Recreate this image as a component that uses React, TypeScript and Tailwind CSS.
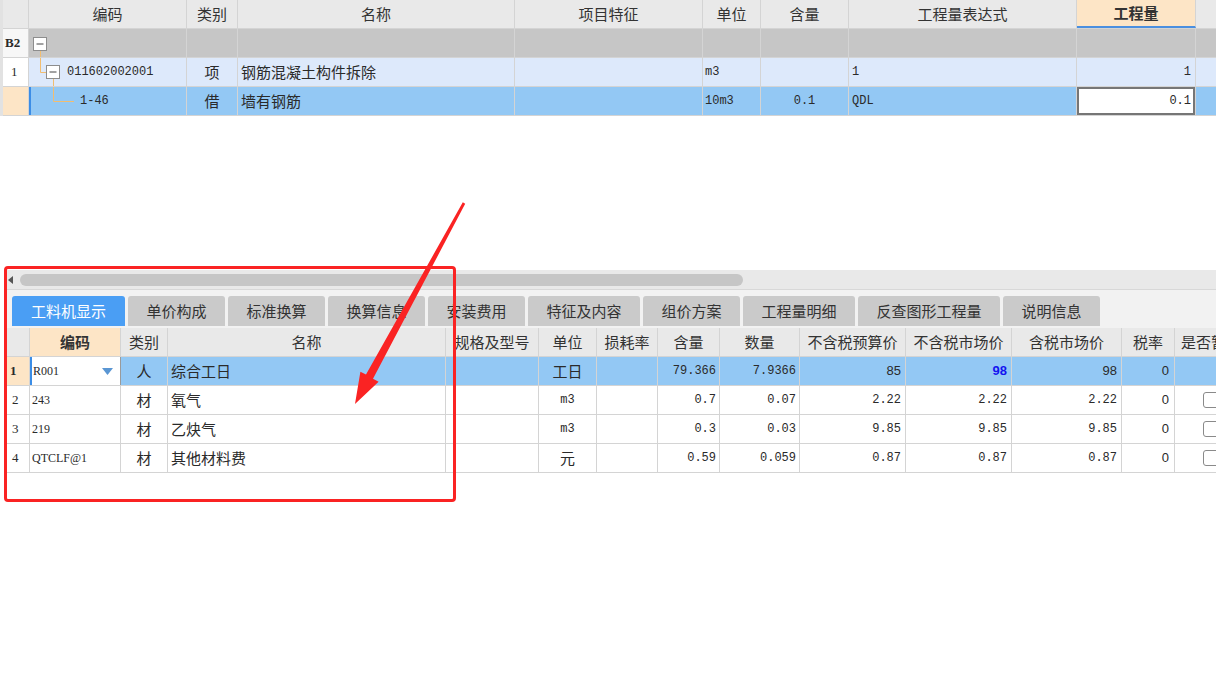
import React from "react";

const cjk = "font-['Noto_Sans_CJK_SC',sans-serif]";
const mono = "font-['Liberation_Mono','Noto_Sans_CJK_SC',monospace]";
const serif = "font-['Liberation_Serif',serif]";
const sans = "font-['Liberation_Sans',sans-serif]";

const cell = "shrink-0 h-full border-r border-[#d4d4d4] flex items-center overflow-hidden whitespace-nowrap relative";

// top grid columns
const T = [
  "w-[26px]",
  "w-[158px]",
  "w-[51px]",
  "w-[277px]",
  "w-[188px]",
  "w-[58px]",
  "w-[88px]",
  "w-[228px]",
  "w-[119px]",
  "w-[40px]",
];

// bottom grid columns
const B = [
  "w-[23px]",
  "w-[91px]",
  "w-[47px]",
  "w-[278px]",
  "w-[93px]",
  "w-[58px]",
  "w-[61px]",
  "w-[62px]",
  "w-[80px]",
  "w-[106px]",
  "w-[106px]",
  "w-[110px]",
  "w-[53px]",
  "w-[60px]",
];

const tabs = [
  { label: "工料机显示", w: "w-[113px]", active: true },
  { label: "单价构成", w: "w-[97px]" },
  { label: "标准换算", w: "w-[97px]" },
  { label: "换算信息", w: "w-[97px]" },
  { label: "安装费用", w: "w-[97px]" },
  { label: "特征及内容", w: "w-[112px]" },
  { label: "组价方案", w: "w-[97px]" },
  { label: "工程量明细", w: "w-[112px]" },
  { label: "反查图形工程量", w: "w-[142px]" },
  { label: "说明信息", w: "w-[97px]" },
];

const rows = [
  { n: "2", code: "243", type: "材", name: "氧气", unit: "m3", hl: "0.7", qty: "0.07", p1: "2.22", p2: "2.22", p3: "2.22" },
  { n: "3", code: "219", type: "材", name: "乙炔气", unit: "m3", hl: "0.3", qty: "0.03", p1: "9.85", p2: "9.85", p3: "9.85" },
  { n: "4", code: "QTCLF@1", type: "材", name: "其他材料费", unit: "元", hl: "0.59", qty: "0.059", p1: "0.87", p2: "0.87", p3: "0.87" },
];

function MinusBox({ x, y }: { x: number; y: number }) {
  return (
    <g>
      <rect x={x + 0.5} y={y + 0.5} width={13} height={13} fill="#fff" stroke="#8d8d8d" />
      <line x1={x + 3.5} y1={y + 7} x2={x + 10.5} y2={y + 7} stroke="#444" />
    </g>
  );
}

export default function App() {
  return (
    <div className={`relative w-[1216px] h-[697px] overflow-hidden bg-white text-[#2a2a2a] ${cjk}`}>
      {/* top grid */}
      <div className="border-l-[3px] border-[#e2e2e2]">
        <div className="flex h-[29px] bg-[#e9e9e9] border-b border-[#d4d4d4] text-[15px] text-[#333]">
          <div className={`${cell} ${T[0]}`} />
          <div className={`${cell} ${T[1]} justify-center`}>编码</div>
          <div className={`${cell} ${T[2]} justify-center`}>类别</div>
          <div className={`${cell} ${T[3]} justify-center`}>名称</div>
          <div className={`${cell} ${T[4]} justify-center`}>项目特征</div>
          <div className={`${cell} ${T[5]} justify-center`}>单位</div>
          <div className={`${cell} ${T[6]} justify-center`}>含量</div>
          <div className={`${cell} ${T[7]} justify-center`}>工程量表达式</div>
          <div className={`${cell} ${T[8]} justify-center bg-[#fde5c6] font-bold border-b-2 border-b-[#4a8fe0]`}>工程量</div>
          <div className={`${cell} ${T[9]}`} />
        </div>

        {/* B2 row */}
        <div className="flex h-[29px] bg-[#c6c6c6] border-b border-[#d4d4d4]">
          <div className={`${cell} ${T[0]} bg-[#f7f7f7] pl-[2px] ${serif} font-bold text-[13px]`}>B2</div>
          <div className={`${cell} ${T[1]}`}>
            <svg className="absolute inset-0 overflow-visible" width="158" height="29">
              <line x1="11.5" y1="22" x2="11.5" y2="29" stroke="#f2bd70" />
              <MinusBox x={4} y={8} />
            </svg>
          </div>
          <div className={`${cell} ${T[2]}`} />
          <div className={`${cell} ${T[3]}`} />
          <div className={`${cell} ${T[4]}`} />
          <div className={`${cell} ${T[5]}`} />
          <div className={`${cell} ${T[6]}`} />
          <div className={`${cell} ${T[7]}`} />
          <div className={`${cell} ${T[8]}`} />
          <div className={`${cell} ${T[9]}`} />
        </div>

        {/* row 1 */}
        <div className="flex h-[29px] bg-[#dde9fb] border-b border-[#d4d4d4] text-[15px]">
          <div className={`${cell} ${T[0]} bg-white pl-[8px] ${serif} text-[13px]`}>1</div>
          <div className={`${cell} ${T[1]}`}>
            <svg className="absolute inset-0 overflow-visible" width="158" height="29">
              <path d="M11.5 0 V14.5 H17" fill="none" stroke="#f2bd70" />
              <line x1="24.5" y1="21" x2="24.5" y2="29" stroke="#f2bd70" />
              <MinusBox x={17} y={7} />
            </svg>
            <span className={`pl-[38px] ${mono} text-[12px]`}>011602002001</span>
          </div>
          <div className={`${cell} ${T[2]} justify-center`}>项</div>
          <div className={`${cell} ${T[3]} pl-[3px]`}>钢筋混凝土构件拆除</div>
          <div className={`${cell} ${T[4]}`} />
          <div className={`${cell} ${T[5]} pl-[2px] ${mono} text-[12px]`}>m3</div>
          <div className={`${cell} ${T[6]}`} />
          <div className={`${cell} ${T[7]} pl-[3px] ${mono} text-[12px]`}>1</div>
          <div className={`${cell} ${T[8]} justify-end pr-[4px] ${mono} text-[12px]`}>1</div>
          <div className={`${cell} ${T[9]}`} />
        </div>

        {/* row 2 selected */}
        <div className="flex h-[29px] bg-[#93c8f4] border-b border-[#d4d4d4] text-[15px]">
          <div className={`${cell} ${T[0]} bg-[#fde5c6]`} />
          <div className={`${cell} ${T[1]} border-l-2 border-l-[#3b8de6]`}>
            <svg className="absolute inset-0 overflow-visible" width="158" height="29">
              <path d="M22.5 0 V14.5 H43" fill="none" stroke="#f2bd70" />
            </svg>
            <span className={`pl-[49px] ${mono} text-[12px]`}>1-46</span>
          </div>
          <div className={`${cell} ${T[2]} justify-center`}>借</div>
          <div className={`${cell} ${T[3]} pl-[3px]`}>墙有钢筋</div>
          <div className={`${cell} ${T[4]}`} />
          <div className={`${cell} ${T[5]} pl-[2px] ${mono} text-[12px]`}>10m3</div>
          <div className={`${cell} ${T[6]} justify-center ${mono} text-[12px]`}>0.1</div>
          <div className={`${cell} ${T[7]} pl-[3px] ${mono} text-[12px]`}>QDL</div>
          <div className={`${cell} ${T[8]} p-0`}>
            <div className={`w-full h-full bg-white border-2 border-[#767676] flex items-center justify-end pr-[2px] ${mono} text-[12px]`}>0.1</div>
          </div>
          <div className={`${cell} ${T[9]}`} />
        </div>
      </div>

      {/* spacer */}
      <div className="h-[154px]" />

      {/* bottom panel */}
      <div className="ml-[7px]">
        {/* horizontal scrollbar */}
        <div className="flex items-center h-[19px] bg-[#e9e9e9]">
          <svg className="ml-[1px] shrink-0" width="5" height="8" viewBox="0 0 5 8">
            <path d="M5 0 L0 4 L5 8 Z" fill="#555" />
          </svg>
          <div className="ml-[7px] w-[723px] h-[12px] rounded-full bg-[#c6c6c6]" />
        </div>

        {/* tabs */}
        <div className="h-[39px] bg-[#f2f2f2] border-t border-[#d8d8d8] pt-[6px] pl-[5px] flex gap-[3px]">
          {tabs.map((t) => (
            <div
              key={t.label}
              className={`${t.w} h-[30px] shrink-0 rounded-t-[3px] flex items-center justify-center text-[15px] ${
                t.active ? "bg-[#4a9ef4] text-white" : "bg-[#cacaca] text-[#333]"
              }`}
            >
              {t.label}
            </div>
          ))}
        </div>

        {/* bottom grid */}
        <div className="overflow-hidden">
          <div className="flex h-[29px] bg-[#e9e9e9] border-b border-[#d4d4d4] text-[15px] text-[#333]">
            <div className={`${cell} ${B[0]}`} />
            <div className={`${cell} ${B[1]} justify-center bg-[#fde5c6] font-bold`}>编码</div>
            <div className={`${cell} ${B[2]} justify-center`}>类别</div>
            <div className={`${cell} ${B[3]} justify-center`}>名称</div>
            <div className={`${cell} ${B[4]} justify-center`}>规格及型号</div>
            <div className={`${cell} ${B[5]} justify-center`}>单位</div>
            <div className={`${cell} ${B[6]} justify-center`}>损耗率</div>
            <div className={`${cell} ${B[7]} justify-center`}>含量</div>
            <div className={`${cell} ${B[8]} justify-center`}>数量</div>
            <div className={`${cell} ${B[9]} justify-center`}>不含税预算价</div>
            <div className={`${cell} ${B[10]} justify-center`}>不含税市场价</div>
            <div className={`${cell} ${B[11]} justify-center`}>含税市场价</div>
            <div className={`${cell} ${B[12]} justify-center`}>税率</div>
            <div className={`${cell} ${B[13]} pl-[6px]`}>是否暂估</div>
          </div>

          {/* selected row */}
          <div className="flex h-[29px] bg-[#93c8f4] border-b border-[#d4d4d4] text-[15px]">
            <div className={`${cell} ${B[0]} bg-[#fde5c6] pl-[3px] ${serif} font-bold text-[13px]`}>1</div>
            <div className={`${cell} ${B[1]} bg-white border-l-2 border-l-[#3b8de6] border-r-[#9a9a9a] pl-[1px] ${serif} text-[12px]`}>
              <span>R001</span>
              <svg className="ml-auto mr-[7px]" width="11" height="7" viewBox="0 0 11 7">
                <path d="M0 0 H11 L5.5 7 Z" fill="#5a96d3" />
              </svg>
            </div>
            <div className={`${cell} ${B[2]} justify-center`}>人</div>
            <div className={`${cell} ${B[3]} pl-[3px]`}>综合工日</div>
            <div className={`${cell} ${B[4]}`} />
            <div className={`${cell} ${B[5]} justify-center`}>工日</div>
            <div className={`${cell} ${B[6]}`} />
            <div className={`${cell} ${B[7]} justify-end pr-[3px] ${mono} text-[12px]`}>79.366</div>
            <div className={`${cell} ${B[8]} justify-end pr-[3px] ${mono} text-[12px]`}>7.9366</div>
            <div className={`${cell} ${B[9]} justify-end pr-[4px] ${sans} text-[13px]`}>85</div>
            <div className={`${cell} ${B[10]} justify-end pr-[4px] ${sans} text-[13px] font-bold text-[#1414f0]`}>98</div>
            <div className={`${cell} ${B[11]} justify-end pr-[4px] ${sans} text-[13px]`}>98</div>
            <div className={`${cell} ${B[12]} justify-end pr-[5px] ${sans} text-[13px]`}>0</div>
            <div className={`${cell} ${B[13]}`} />
          </div>

          {rows.map((r) => (
            <div key={r.n} className="flex h-[29px] bg-white border-b border-[#d4d4d4] text-[15px]">
              <div className={`${cell} ${B[0]} pl-[5px] ${serif} text-[13px]`}>{r.n}</div>
              <div className={`${cell} ${B[1]} pl-[2px] ${serif} text-[12px]`}>{r.code}</div>
              <div className={`${cell} ${B[2]} justify-center`}>{r.type}</div>
              <div className={`${cell} ${B[3]} pl-[3px]`}>{r.name}</div>
              <div className={`${cell} ${B[4]}`} />
              <div className={`${cell} ${B[5]} justify-center ${r.unit === "元" ? "" : `${mono} text-[12px]`}`}>{r.unit}</div>
              <div className={`${cell} ${B[6]}`} />
              <div className={`${cell} ${B[7]} justify-end pr-[3px] ${mono} text-[12px]`}>{r.hl}</div>
              <div className={`${cell} ${B[8]} justify-end pr-[3px] ${mono} text-[12px]`}>{r.qty}</div>
              <div className={`${cell} ${B[9]} justify-end pr-[4px] ${mono} text-[12px]`}>{r.p1}</div>
              <div className={`${cell} ${B[10]} justify-end pr-[4px] ${mono} text-[12px]`}>{r.p2}</div>
              <div className={`${cell} ${B[11]} justify-end pr-[4px] ${mono} text-[12px]`}>{r.p3}</div>
              <div className={`${cell} ${B[12]} justify-end pr-[5px] ${sans} text-[13px]`}>0</div>
              <div className={`${cell} ${B[13]} pl-[28px]`}>
                <div className="w-[16px] h-[16px] shrink-0 rounded-[3px] border border-[#8a8a8a] bg-white" />
              </div>
            </div>
          ))}
        </div>
      </div>

      {/* red annotation */}
      <div className="absolute left-[4px] top-[266px] w-[452px] h-[236px] border-[3px] border-[#fa2323] rounded-[4px] pointer-events-none" />
      <svg className="absolute inset-0 pointer-events-none" width="1216" height="697">
        <polygon
          points="462.8,202.3 465.2,203.7 373,378.8 378.6,381.8 355,404 360.4,371.8 366,374.6"
          fill="#fa2323"
        />
      </svg>
    </div>
  );
}
